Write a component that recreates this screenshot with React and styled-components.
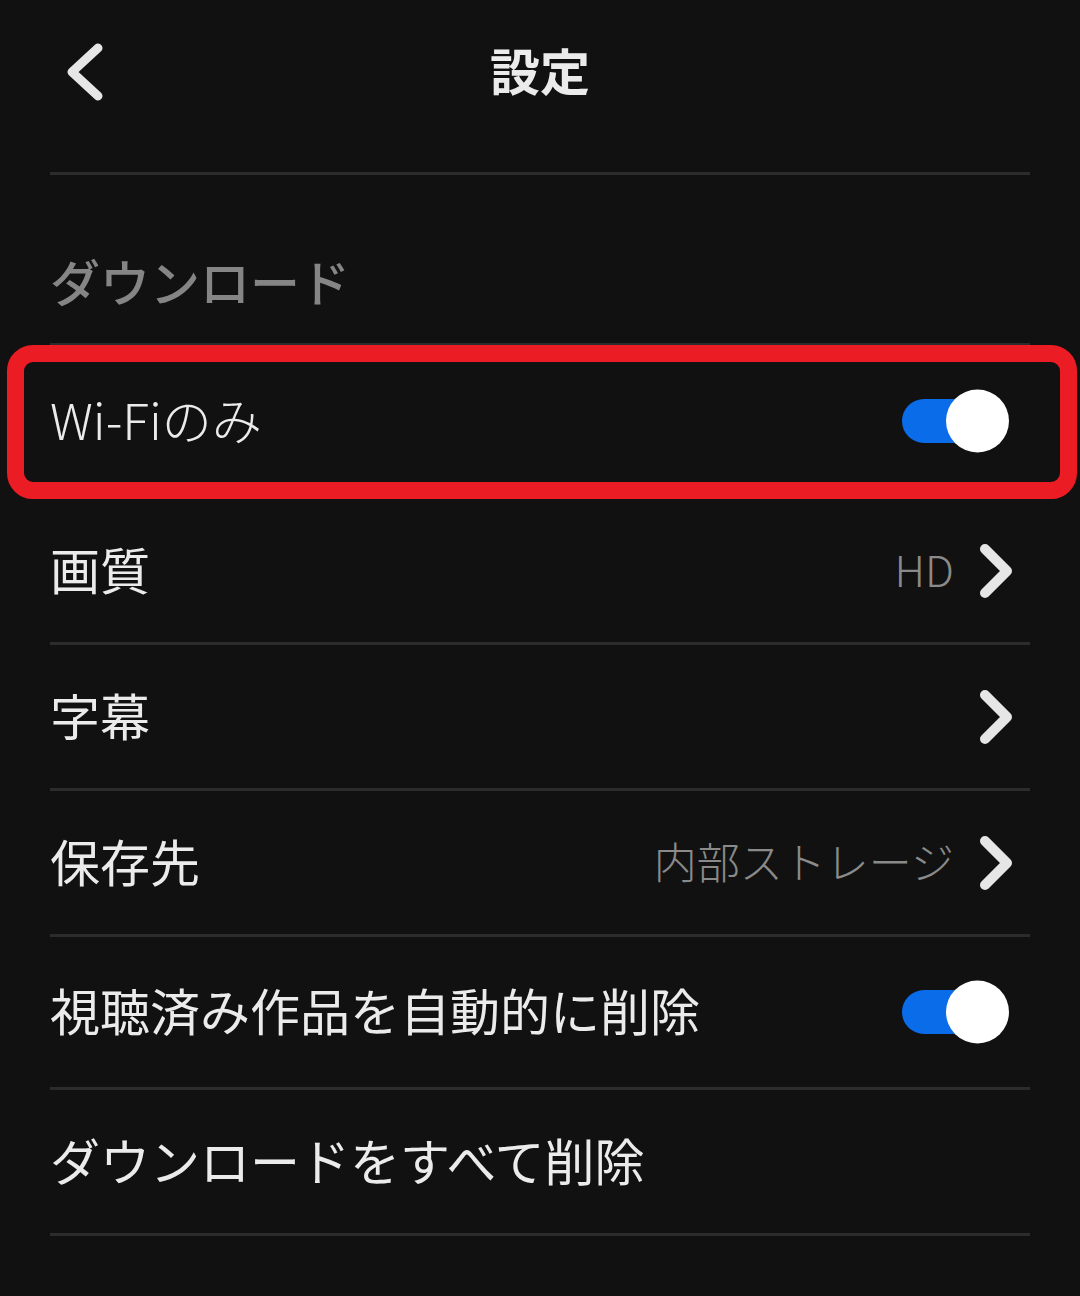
import React, { useState } from "react";
import styled, { createGlobalStyle } from "styled-components";

const GlobalStyle = createGlobalStyle`
  html, body {
    margin: 0;
    padding: 0;
    background: #111111;
  }
  body {
    font-family: "Noto Sans CJK JP", "Noto Sans", sans-serif;
    color: #ebebeb;
  }
`;

const Page = styled.div`
  width: 1080px;
  min-height: 1296px;
  box-sizing: border-box;
  padding: 0 50px;
  background: #111111;
`;

const Header = styled.header`
  height: 144px;
  margin-bottom: 28px;
  display: grid;
  grid-template-columns: 1fr auto 1fr;
  align-items: center;
`;

const BackButton = styled.button`
  justify-self: start;
  margin-left: 16px;
  padding: 0;
  border: none;
  background: none;
  display: flex;
  cursor: pointer;
`;

const Title = styled.h1`
  margin: 0 0 6px;
  font-size: 50px;
  font-weight: 700;
  line-height: 60px;
  color: #ebebeb;
`;

const Divider = styled.div`
  height: 3px;
  background: #2c2c2c;
`;

const SectionTitle = styled.h2`
  margin: 0;
  padding: 75px 0 33px;
  font-size: 50px;
  line-height: 60px;
  font-weight: 500;
  color: #858585;
  border-bottom: 3px solid #2c2c2c;
`;

const Row = styled.div`
  position: relative;
  height: ${(p) => p.$height}px;
  display: flex;
  align-items: center;
  border-bottom: 3px solid #2c2c2c;
  cursor: pointer;
`;

const Highlight = styled.div`
  position: absolute;
  top: -1px;
  bottom: -3px;
  left: -43px;
  right: -47px;
  border: 17px solid #ec1c24;
  border-radius: 26px;
  pointer-events: none;
`;

const Label = styled.span`
  flex: 1;
  margin-bottom: 6px;
  font-size: 50px;
  line-height: 60px;
  font-weight: ${(p) => (p.$light ? 300 : 400)};
  color: #ebebeb;
`;

const Value = styled.span`
  margin: 0 25px 6px 0;
  font-size: 43px;
  line-height: 60px;
  font-weight: 300;
  color: #8a8a8a;
`;

const ChevronBox = styled.span`
  display: flex;
  margin-right: 17px;
`;

const Track = styled.span`
  position: relative;
  width: 100px;
  height: 44px;
  border-radius: 22px;
  background: ${(p) => (p.$on ? "#0a6ce8" : "#3a3a3a")};
  margin-right: 28px;
`;

const Knob = styled.span`
  position: absolute;
  top: 50%;
  ${(p) => (p.$on ? "right: -7px;" : "left: -7px;")}
  width: 63px;
  height: 63px;
  border-radius: 50%;
  background: #ffffff;
  transform: translateY(-50%);
`;

const Chevron = () => (
  <ChevronBox>
    <svg width="34" height="56" viewBox="0 0 34 56">
      <path
        d="M6 6 L28 28 L6 50"
        fill="none"
        stroke="#e6e6e6"
        strokeWidth="10"
        strokeLinecap="round"
        strokeLinejoin="round"
      />
    </svg>
  </ChevronBox>
);

const Toggle = ({ on, onChange }) => (
  <Track $on={on} onClick={onChange}>
    <Knob $on={on} />
  </Track>
);

export default function App() {
  const [wifiOnly, setWifiOnly] = useState(true);
  const [autoDelete, setAutoDelete] = useState(true);

  return (
    <>
      <GlobalStyle />
      <Page>
        <Header>
          <BackButton aria-label="戻る">
            <svg width="38" height="58" viewBox="0 0 38 58">
              <path
                d="M32 5 L6 29 L32 53"
                fill="none"
                stroke="#e6e6e6"
                strokeWidth="9"
                strokeLinecap="round"
                strokeLinejoin="round"
              />
            </svg>
          </BackButton>
          <Title>設定</Title>
          <span />
        </Header>
        <Divider />
        <SectionTitle>ダウンロード</SectionTitle>

        <Row $height={150}>
          <Label $light>Wi-Fiのみ</Label>
          <Toggle on={wifiOnly} onChange={() => setWifiOnly(!wifiOnly)} />
          <Highlight />
        </Row>
        <Row $height={143}>
          <Label>画質</Label>
          <Value>HD</Value>
          <Chevron />
        </Row>
        <Row $height={143}>
          <Label>字幕</Label>
          <Chevron />
        </Row>
        <Row $height={143}>
          <Label>保存先</Label>
          <Value>内部ストレージ</Value>
          <Chevron />
        </Row>
        <Row $height={150}>
          <Label>視聴済み作品を自動的に削除</Label>
          <Toggle on={autoDelete} onChange={() => setAutoDelete(!autoDelete)} />
        </Row>
        <Row $height={143}>
          <Label>ダウンロードをすべて削除</Label>
        </Row>
      </Page>
    </>
  );
}
